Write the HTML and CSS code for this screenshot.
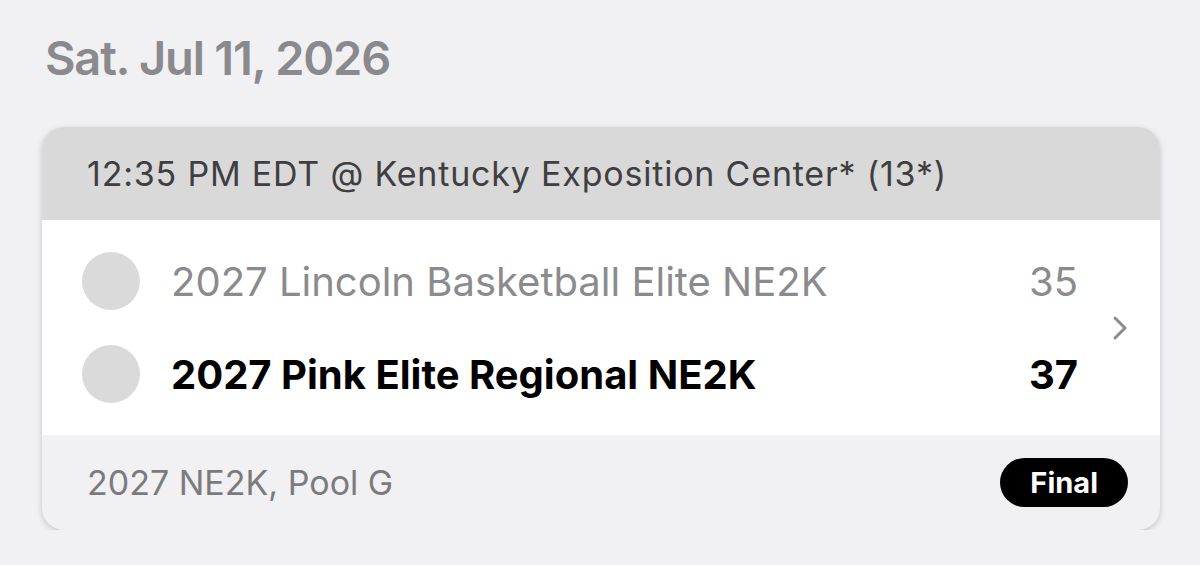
FILE: index.html
```html
<!DOCTYPE html>
<html lang="en">
<head>
  <meta charset="UTF-8" />
  <meta name="viewport" content="width=device-width, initial-scale=1.0"/>
  <title>Schedule</title>
  <link rel="stylesheet" href="styles.css">
</head>
<body>

  <h1 class="day">Sat. Jul 11, 2026</h1>

  <div class="game-card">
    <div class="game-head">12:35 PM EDT @ Kentucky Exposition Center* (13*)</div>

    <div class="game-body">
      <div class="teams">
        <div class="team">
          <span class="team-logo"></span>
          <span class="team-name">2027 Lincoln Basketball Elite NE2K</span>
          <span class="team-score">35</span>
        </div>
        <div class="team winner">
          <span class="team-logo"></span>
          <span class="team-name">2027 Pink Elite Regional NE2K</span>
          <span class="team-score">37</span>
        </div>
      </div>
      <svg class="chevron" width="17" height="26" viewBox="0 0 17 26">
        <path d="M3 3 L13 13 L3 23" fill="none" stroke="#8b8b8d" stroke-width="3" stroke-linecap="round" stroke-linejoin="round"/>
      </svg>
    </div>

    <div class="game-foot">
      <span class="pool">2027 NE2K, Pool G</span>
      <span class="status">Final</span>
    </div>
  </div>

</body>
</html>
```

FILE: styles.css
```css
body {
  font-family: Inter, 'Noto Sans', sans-serif;
  background: #f1f1f3;
  color: #222;
  margin: 0;
  padding: 0 40px 0 42px;
}
.day {
  margin: 0;
  padding: 30px 0 0 3px;
  height: 127px;
  box-sizing: border-box;
  font-size: 47px;
  line-height: 56px;
  font-weight: 600;
  color: #8a898d;
  letter-spacing: -1.2px;
}
.game-card {
  width: 1118px;
  border-radius: 22px;
  background: #f1f1f3;
  box-shadow: 0 2px 6px rgba(0, 0, 0, 0.18);
  overflow: hidden;
}
.game-head {
  background: #d9d9d9;
  height: 93px;
  padding-left: 45px;
  display: flex;
  align-items: center;
  font-size: 34px;
  letter-spacing: 0.8px;
  color: #3f3f41;
}
.game-body {
  background: #fff;
  height: 215px;
  display: flex;
  align-items: center;
  padding: 0 31px 0 40px;
}
.teams {
  flex: 1;
  display: flex;
  flex-direction: column;
  gap: 35px;
}
.team {
  display: flex;
  align-items: center;
  height: 58px;
  font-size: 40px;
  color: #8b8b8d;
}
.team-logo {
  width: 58px;
  height: 58px;
  border-radius: 50%;
  background: #dadada;
  margin-right: 31px;
}
.team-name {
  flex: 1;
}
.team-score {
  margin-right: 2px;
}
.team.winner {
  color: #000;
  font-weight: 700;
}
.chevron {
  margin-left: 32px;
}
.game-foot {
  height: 95px;
  display: flex;
  align-items: center;
  justify-content: space-between;
  padding: 0 32px 0 45px;
  font-size: 34px;
  color: #7b7b7d;
}
.status {
  background: #000;
  color: #fff;
  font-weight: 700;
  font-size: 29px;
  line-height: 49px;
  border-radius: 25px;
  padding: 0 30px;
}
```
